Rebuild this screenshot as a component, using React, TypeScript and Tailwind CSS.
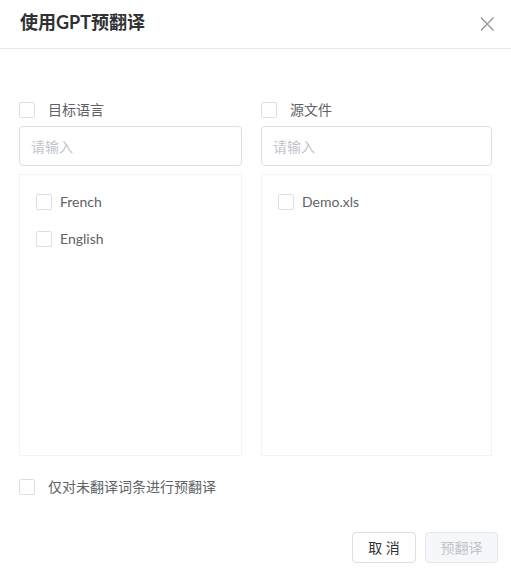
import { useState } from 'react'

const FONT = "font-['Lato','Noto_Sans_CJK_SC',sans-serif]"

function Box({ checked, onClick }: { checked: boolean; onClick: () => void }) {
  return (
    <button
      onClick={onClick}
      className={`w-4 h-4 shrink-0 rounded-[2px] border flex items-center justify-center ${
        checked ? 'bg-[#409eff] border-[#409eff]' : 'bg-white border-[#dcdfe6]'
      }`}
    >
      {checked && (
        <svg width="10" height="10" viewBox="0 0 10 10" fill="none">
          <path d="M2 5.2 4.2 7.3 8.2 2.8" stroke="white" strokeWidth="1.5" />
        </svg>
      )}
    </button>
  )
}

function Panel({
  title,
  items,
  width,
}: {
  title: string
  items: string[]
  width: string
}) {
  const [all, setAll] = useState(false)
  const [picked, setPicked] = useState<Set<string>>(new Set())

  function toggle(name: string) {
    setPicked((prev) => {
      const next = new Set(prev)
      if (next.has(name)) next.delete(name); else next.add(name)
      return next
    })
  }

  return (
    <div className={width}>
      <div className="h-5 flex items-center gap-[13px]">
        <Box checked={all} onClick={() => setAll(!all)} />
        <span className="text-sm text-[#606266]">{title}</span>
      </div>
      <input
        placeholder="请输入"
        className="mt-[6px] w-full h-10 rounded border border-[#dcdfe6] px-[11px] text-sm text-[#606266] placeholder:text-[#c0c4cc] outline-none"
      />
      <div className="mt-2 h-[282px] border border-[#f2f3f6] pt-[19px] pl-4">
        {items.map((it) => (
          <div key={it} className="h-4 mb-[21px] flex items-center gap-2">
            <Box checked={picked.has(it)} onClick={() => toggle(it)} />
            <span className="text-sm text-[#606266]">{it}</span>
          </div>
        ))}
      </div>
    </div>
  )
}

export default function App() {
  const [onlyNew, setOnlyNew] = useState(false)

  return (
    <div className={`w-[511px] h-[573px] bg-white ${FONT}`}>
      <div className="h-[49px] border-b border-[#e8eaef] flex items-start justify-between pl-5 pr-4 pt-[10px]">
        <h1 className="text-lg font-bold leading-6 text-[#303133]">使用GPT预翻译</h1>
        <button className="mt-[6px] text-[#909399]">
          <svg width="16" height="16" viewBox="0 0 16 16" fill="none">
            <path d="M2 1.5 14.5 14.5M14.5 1.5 2 14.5" stroke="currentColor" strokeWidth="1.2" />
          </svg>
        </button>
      </div>

      <div className="pl-[19px] pt-[51px]">
        <div className="flex gap-[19px]">
          <Panel title="目标语言" items={['French', 'English']} width="w-[223px]" />
          <Panel title="源文件" items={['Demo.xls']} width="w-[231px]" />
        </div>

        <div className="mt-[23px] h-4 flex items-center gap-[13px]">
          <Box checked={onlyNew} onClick={() => setOnlyNew(!onlyNew)} />
          <span className="text-sm text-[#606266]">仅对未翻译词条进行预翻译</span>
        </div>
      </div>

      <div className="mt-[37px] pr-[13px] flex justify-end gap-[9px]">
        <button className="w-16 h-[31px] rounded border border-[#dcdfe6] bg-white text-sm text-[#303133]">
          取 消
        </button>
        <button className="w-[73px] h-[31px] rounded border border-[#e4e7ed] bg-[#f5f7fa] text-sm text-[#c0c4cc]">
          预翻译
        </button>
      </div>
    </div>
  )
}
